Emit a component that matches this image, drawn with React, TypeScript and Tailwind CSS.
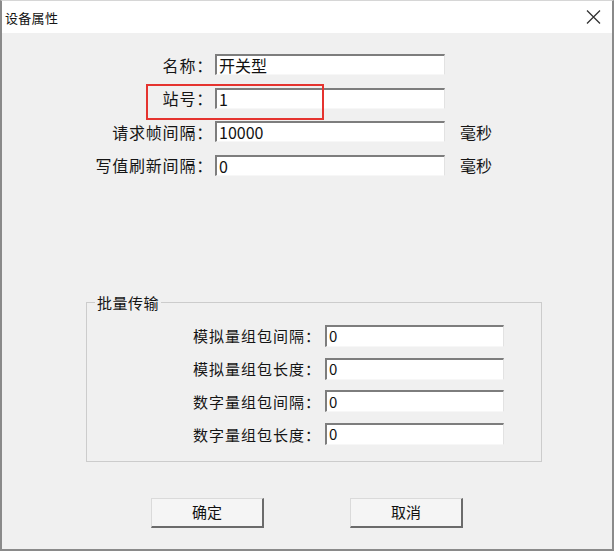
const topRows = [
  { label: "名称：", value: "开关型", unit: "" },
  { label: "站号：", value: "1", unit: "" },
  { label: "请求帧间隔：", value: "10000", unit: "毫秒" },
  { label: "写值刷新间隔：", value: "0", unit: "毫秒" },
];

const batchRows = ["模拟量组包间隔：", "模拟量组包长度：", "数字量组包间隔：", "数字量组包长度："];

const fieldCls =
  "border-t-2 border-l-2 border-r border-b border-t-[#7d7d7d] border-l-[#7d7d7d] border-r-[#e2e2e2] border-b-[#f7f7f7] bg-white pl-[2px] text-[#111] outline-none";

const btnCls =
  "h-[30px] w-[113px] border-l border-t border-b-2 border-r-2 border-l-[#dadada] border-t-[#dadada] border-b-[#6b6b6b] border-r-[#6b6b6b] bg-[#f5f5f5] text-[15px] text-[#111]";

export default function App() {
  return (
    <div className="h-[553px] w-[615px] bg-white font-['Noto_Sans_CJK_SC',sans-serif] text-[#151515]">
      <div className="flex h-[551px] w-[614px] flex-col border-x-2 border-b-2 border-t border-[#8a8a8a] border-t-[#d6d6d6]">
        {/* Title bar */}
        <div className="flex h-[32px] items-center justify-between bg-white pl-[3px] pr-[11px]">
          <span className="text-[13px] leading-none tracking-[0.3px]">设备属性</span>
          <svg width="15" height="14" viewBox="0 0 15 14">
            <path d="M1 0.5 L14 13.5 M14 0.5 L1 13.5" stroke="#333" strokeWidth="1.3" />
          </svg>
        </div>

        {/* Body */}
        <div className="relative flex-1 bg-[#f0f0f0]">
          <div className="mt-[21px] flex flex-col gap-[12.67px]">
            {topRows.map(({ label, value, unit }) => (
              <div key={label} className="flex h-[21px] items-center">
                <span className="w-[211px] text-right text-[16px] leading-none tracking-[0.8px]">{label}</span>
                <input
                  readOnly
                  value={value}
                  className={`ml-[2px] h-[21px] w-[230px] text-[16px] ${fieldCls}`}
                />
                {unit && <span className="ml-[15px] text-[16px] leading-none">{unit}</span>}
              </div>
            ))}
          </div>

          {/* Annotation box */}
          <div className="absolute left-[144px] top-[51px] h-[36px] w-[178px] border-2 border-[#e5332f]" />

          <fieldset className="ml-[84px] mt-[117px] w-[456px] border border-[#cccccc] pb-[16px] pt-[12px]">
            <legend className="ml-[8px] px-[2px] text-[15px] leading-[20px] tracking-[0.5px]">批量传输</legend>
            <div className="flex flex-col gap-[10.7px]">
              {batchRows.map((label) => (
                <div key={label} className="flex h-[22px] items-center">
                  <span className="w-[234px] text-right text-[15px] leading-none tracking-[1px]">{label}</span>
                  <input
                    readOnly
                    value="0"
                    className={`ml-[4px] h-[22px] w-[179px] text-[15px] ${fieldCls}`}
                  />
                </div>
              ))}
            </div>
          </fieldset>

          {/* Buttons */}
          <div className="mt-[36px] flex">
            <button className={`ml-[149px] ${btnCls}`}>确定</button>
            <button className={`ml-[86px] ${btnCls}`}>取消</button>
          </div>
        </div>
      </div>
    </div>
  );
}
